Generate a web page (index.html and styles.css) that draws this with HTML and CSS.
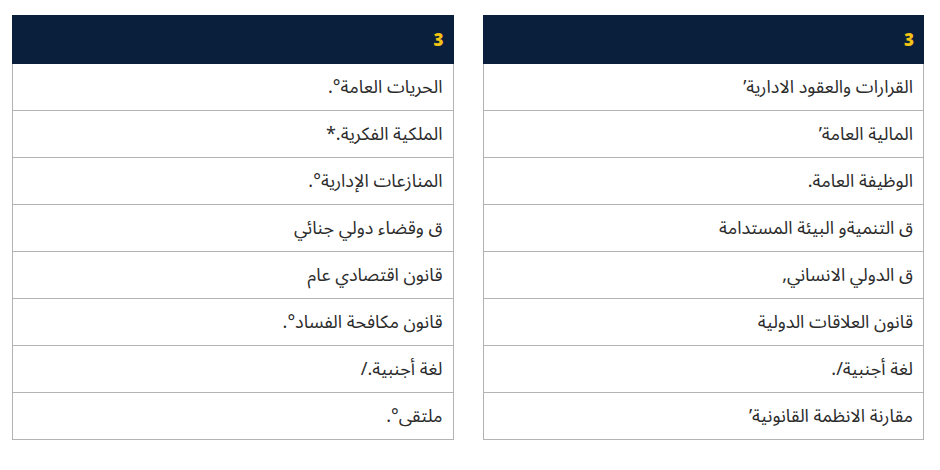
FILE: index.html
```html
<!DOCTYPE html>
<html lang="ar" dir="rtl">
<head>
<meta charset="utf-8">
<link rel="stylesheet" href="styles.css">
</head>
<body>
<div class="wrap">
  <table class="plan">
    <thead><tr><th>3</th></tr></thead>
    <tbody>
      <tr><td>القرارات والعقود الادارية’</td></tr>
      <tr><td>المالية العامة’</td></tr>
      <tr><td>الوظيفة العامة.</td></tr>
      <tr><td>ق التنميةو البيئة المستدامة</td></tr>
      <tr><td>ق الدولي الانساني,</td></tr>
      <tr><td>قانون العلاقات الدولية</td></tr>
      <tr><td>لغة أجنبية/.</td></tr>
      <tr><td>مقارنة الانظمة القانونية’</td></tr>
    </tbody>
  </table>
  <table class="plan">
    <thead><tr><th>3</th></tr></thead>
    <tbody>
      <tr><td>الحريات العامة°.</td></tr>
      <tr><td>الملكية الفكرية.*</td></tr>
      <tr><td>المنازعات الإدارية°.</td></tr>
      <tr><td>ق وقضاء دولي جنائي</td></tr>
      <tr><td>قانون اقتصادي عام</td></tr>
      <tr><td>قانون مكافحة الفساد°.</td></tr>
      <tr><td>لغة أجنبية./</td></tr>
      <tr><td>ملتقى°.</td></tr>
    </tbody>
  </table>
</div>
</body>
</html>
```
FILE: styles.css
```css
html, body {
  margin: 0;
  padding: 0;
  background: #ffffff;
}
body {
  font-family: "Noto Sans Arabic", "Noto Sans", "DejaVu Sans", sans-serif;
  color: #2b2b2b;
}
.wrap {
  display: flex;
  gap: 29px;
  padding: 15px 16px 0 12px;
}
.plan {
  width: 442px;
  border-collapse: collapse;
  border: 1px solid #b3b3b3;
}
.plan th {
  height: 48px;
  box-sizing: border-box;
  background: #0a1f3b;
  color: #f2c314;
  font-family: "Open Sans", "Noto Sans", sans-serif;
  font-weight: 800;
  font-size: 17px;
  text-align: right;
  padding: 0 9px;
  border: 1px solid #0a1f3b;
}
.plan td {
  height: 47px;
  box-sizing: border-box;
  padding: 0 10px;
  font-size: 18px;
  text-align: right;
  border-top: 1px solid #b3b3b3;
}
.plan tbody tr:first-child td {
  border-top: none;
}
```
